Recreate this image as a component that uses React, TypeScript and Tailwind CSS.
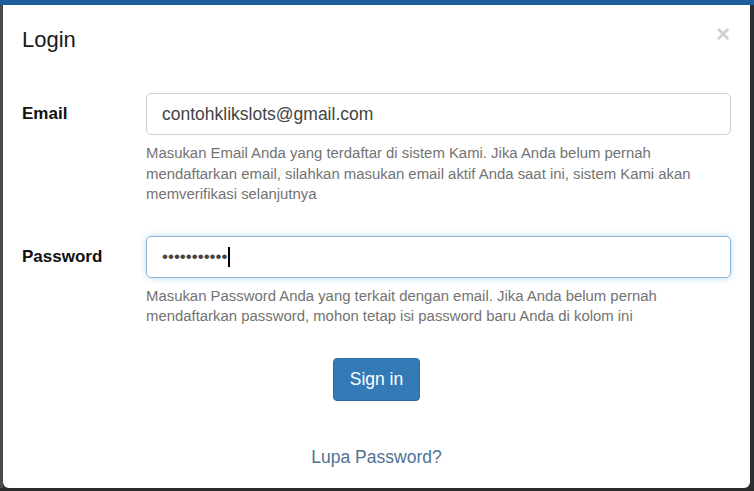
export default function App() {
  return (
    <div className="w-[754px] h-[491px] flex flex-col bg-[#2f3133] overflow-hidden font-['Liberation_Sans',Arial,sans-serif]">
      {/* top strip of the page behind */}
      <div className="h-[5px] bg-[#1f5e9c] shrink-0" />
      <div className="flex flex-1">
        <div className="w-[3px] bg-[#4a4a4a]" />
        <div className="w-[747px] h-[483px] bg-white rounded-b-[6px] relative flex flex-col">
          {/* Header */}
          <div className="h-[70px] flex items-center px-[19px]">
            <h4 className="text-[22px] text-[#1a1a1a] leading-none">Login</h4>
          </div>
          <button className="absolute right-[20px] top-[17px] text-[24px] font-bold text-[#cfcfcf] leading-none">
            ×
          </button>

          {/* Body */}
          <div className="mt-[18px] pl-[19px] pr-[19px]">
            <div className="flex">
              <label className="w-[124px] h-[42px] flex items-center text-[17px] font-bold text-[#111]">
                Email
              </label>
              <div className="flex-1">
                <div className="h-[42px] border border-[#cfcfcf] rounded-[5px] px-[15px] flex items-center text-[17.5px] text-[#444]">
                  contohklikslots@gmail.com
                </div>
                <p className="mt-[8px] text-[14.9px] leading-[20.5px] text-[#737373] whitespace-nowrap">
                  Masukan Email Anda yang terdaftar di sistem Kami. Jika Anda belum pernah
                  <br />
                  mendaftarkan email, silahkan masukan email aktif Anda saat ini, sistem Kami akan
                  <br />
                  memverifikasi selanjutnya
                </p>
              </div>
            </div>

            <div className="flex mt-[31px]">
              <label className="w-[124px] h-[42px] flex items-center text-[17px] font-bold text-[#111]">
                Password
              </label>
              <div className="flex-1">
                <div className="h-[42px] border border-[#8fb3d3] rounded-[5px] px-[15px] flex items-center text-[17px] text-[#444] shadow-[0_0_6px_rgba(102,175,233,0.45)]">
                  <span>•••••••••••</span>
                  <span className="w-[2px] h-[20px] bg-black ml-[1px]" />
                </div>
                <p className="mt-[8px] text-[14.9px] leading-[20.5px] text-[#737373] whitespace-nowrap">
                  Masukan Password Anda yang terkait dengan email. Jika Anda belum pernah
                  <br />
                  mendaftarkan password, mohon tetap isi password baru Anda di kolom ini
                </p>
              </div>
            </div>

            <div className="flex justify-center mt-[31px]">
              <button className="w-[87px] h-[43px] bg-[#337ab7] border border-[#2e6da4] rounded-[4px] text-white text-[17.5px]">
                Sign in
              </button>
            </div>

            <div className="mt-[46px] text-center text-[17.5px] leading-[20px] text-[#4d7391]">
              Lupa Password?
            </div>
          </div>
        </div>
        <div className="flex-1 bg-[#2b2f33]" />
      </div>
      <div className="h-[3px] bg-[#2a2a2a] shrink-0" />
    </div>
  );
}
